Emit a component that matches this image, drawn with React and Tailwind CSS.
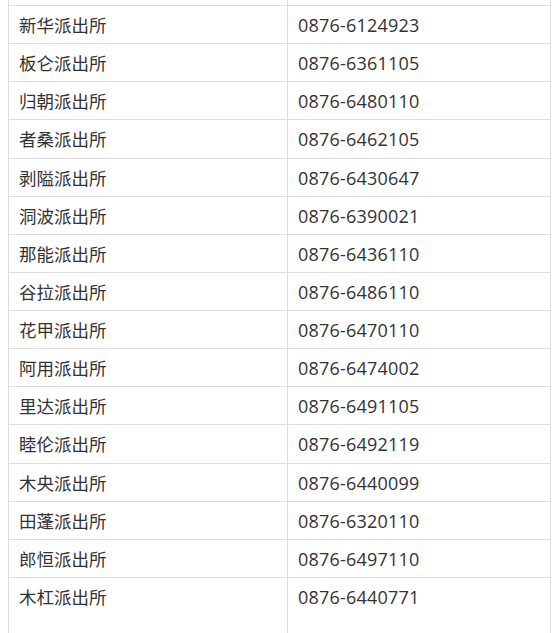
import React from "react";

const rows = [
  ["新华派出所", "0876-6124923"],
  ["板仑派出所", "0876-6361105"],
  ["归朝派出所", "0876-6480110"],
  ["者桑派出所", "0876-6462105"],
  ["剥隘派出所", "0876-6430647"],
  ["洞波派出所", "0876-6390021"],
  ["那能派出所", "0876-6436110"],
  ["谷拉派出所", "0876-6486110"],
  ["花甲派出所", "0876-6470110"],
  ["阿用派出所", "0876-6474002"],
  ["里达派出所", "0876-6491105"],
  ["睦伦派出所", "0876-6492119"],
  ["木央派出所", "0876-6440099"],
  ["田蓬派出所", "0876-6320110"],
  ["郎恒派出所", "0876-6497110"],
  ["木杠派出所", "0876-6440771"],
];

export default function App() {
  return (
    <div className="w-[560px] h-[633px] overflow-hidden bg-white text-[#333] text-[17.5px] font-['Noto_Sans_CJK_SC',sans-serif]">
      <div className="ml-2 w-[543px] border-x border-[#dddddd]">
        <div className="grid grid-cols-[279px_1fr] h-[5px]">
          <div className="border-r border-[#dddddd]" />
          <div />
        </div>
        {rows.map(([name, phone], i) => (
          <div
            key={name}
            className={`grid grid-cols-[279px_1fr] border-t border-[#dddddd] ${
              i === rows.length - 1 ? "h-[70px]" : "h-[38.14px]"
            }`}
          >
            <div className="border-r border-[#dddddd] pl-[10px] pt-[7px] leading-[24px]">
              {name}
            </div>
            <div className="pl-[10px] pt-[7px] leading-[24px] font-['Open_Sans',sans-serif] text-[18px] tracking-[0.2px]">
              {phone}
            </div>
          </div>
        ))}
      </div>
    </div>
  );
}
